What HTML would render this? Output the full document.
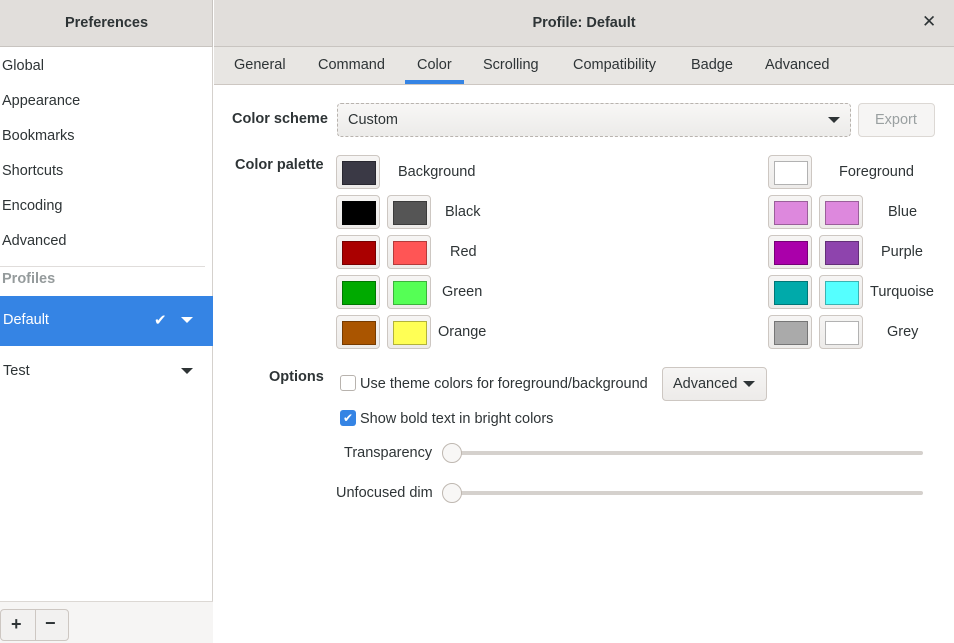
<!DOCTYPE html>
<html><head><style>
*{box-sizing:border-box;margin:0;padding:0}
body{width:954px;height:643px;overflow:hidden;font-family:"Liberation Sans","DejaVu Sans",sans-serif;font-size:14.5px;color:#2e3436;background:#fff;position:relative}
.abs{position:absolute}
.hdr{top:0;height:47px;background:#e1dedb;border-bottom:1px solid #c8c4c0}
.side{left:0;top:47px;width:213px;height:596px;background:#fff;border-right:1px solid #d5d1cd}
.item{position:absolute;left:2px}
.tabs{left:214px;top:47px;width:740px;height:38px;background:#e8e6e3;border-bottom:1px solid #cdc7c2}
.tab{position:absolute;top:10px}
.sw{position:absolute;width:44px;height:34px;border:1px solid #cdc7c2;border-radius:4px;background:linear-gradient(#f6f5f4,#edebe9)}
.sw i{position:absolute;left:5px;top:5px;width:34px;height:24px;border:1px solid rgba(0,0,0,.3)}
.lbl{position:absolute}
.bold{font-weight:bold}
</style></head><body>
<div class="abs hdr" style="left:0;width:213px;border-right:1px solid #c8c4c0"><div class="abs bold" style="left:0;width:213px;text-align:center;top:15px;color:#2e3436">Preferences</div></div>
<div class="abs hdr" style="left:214px;width:740px"><div class="abs bold" style="left:0;width:740px;text-align:center;top:15px">Profile: Default</div><div class="abs" style="left:708px;top:12px;font-size:17px">✕</div></div>
<div class="abs side">
<div class="item" style="top:11px">Global</div>
<div class="item" style="top:46px">Appearance</div>
<div class="item" style="top:81px">Bookmarks</div>
<div class="item" style="top:116px">Shortcuts</div>
<div class="item" style="top:151px">Encoding</div>
<div class="item" style="top:186px">Advanced</div>
<div class="abs" style="left:0;top:219px;width:205px;border-top:1px solid #e0dddb"></div>
<div class="item bold" style="top:224px;color:#959b9c">Profiles</div>
<div class="abs" style="left:0;top:249px;width:213px;height:50px;background:#3584e4;color:#fff"><div class="abs" style="left:3px;top:16px">Default</div><div class="abs" style="left:154px;top:15px;font-size:15px">✔</div><div class="abs" style="left:181px;top:21px;border:6px solid transparent;border-top:6px solid #fff;border-bottom:0"></div></div>
<div class="item" style="top:316px;left:3px">Test</div>
<div class="abs" style="left:181px;top:321px;border:6px solid transparent;border-top:6px solid #2e3436;border-bottom:0"></div>
<div class="abs" style="left:0;top:554px;width:213px;height:42px;background:#f6f5f4;border-top:1px solid #dcd8d4"></div>
<div class="abs" style="left:0;top:562px;width:69px;height:32px;border:1px solid #cdc7c2;border-radius:4px;background:#f2f1f0"><div class="abs" style="left:34px;top:0;height:30px;border-left:1px solid #cdc7c2"></div><div class="abs bold" style="left:10px;top:4px;font-size:18px">+</div><div class="abs bold" style="left:44px;top:3px;font-size:18px">−</div></div>
</div>
<div class="abs tabs">
<div class="tab" style="left:20px">General</div>
<div class="tab" style="left:104px">Command</div>
<div class="tab" style="left:203px">Color</div>
<div class="abs" style="left:191px;top:33px;width:59px;height:4px;background:#3584e4"></div>
<div class="tab" style="left:269px">Scrolling</div>
<div class="tab" style="left:359px">Compatibility</div>
<div class="tab" style="left:477px">Badge</div>
<div class="tab" style="left:551px">Advanced</div>
</div>
<div class="abs bold" style="left:232px;top:111px">Color scheme</div>
<div class="abs" style="left:337px;top:103px;width:514px;height:34px;border:1px dashed #b8b3ae;border-radius:4px;background:linear-gradient(#f8f7f6,#ecebe9)"><div class="abs" style="left:10px;top:8px">Custom</div><div class="abs" style="left:490px;top:13px;border:6px solid transparent;border-top:6px solid #2e3436;border-bottom:0"></div></div>
<div class="abs" style="left:858px;top:103px;width:77px;height:34px;border:1px solid #dcd8d4;border-radius:4px;background:#f6f5f4;color:#9aa0a1"><div class="abs" style="left:16px;top:8px">Export</div></div>
<div class="abs bold" style="left:235px;top:157px">Color palette</div>

<div class="sw" style="left:336px;top:155px"><i style="background:#3a3945"></i></div><div class="lbl" style="left:398px;top:164px">Background</div>
<div class="sw" style="left:336px;top:195px"><i style="background:#000"></i></div><div class="sw" style="left:387px;top:195px"><i style="background:#555"></i></div><div class="lbl" style="left:445px;top:204px">Black</div>
<div class="sw" style="left:336px;top:235px"><i style="background:#aa0000"></i></div><div class="sw" style="left:387px;top:235px"><i style="background:#ff5555"></i></div><div class="lbl" style="left:450px;top:244px">Red</div>
<div class="sw" style="left:336px;top:275px"><i style="background:#00aa00"></i></div><div class="sw" style="left:387px;top:275px"><i style="background:#55ff55"></i></div><div class="lbl" style="left:442px;top:284px">Green</div>
<div class="sw" style="left:336px;top:315px"><i style="background:#aa5500"></i></div><div class="sw" style="left:387px;top:315px"><i style="background:#ffff55"></i></div><div class="lbl" style="left:438px;top:324px">Orange</div>

<div class="sw" style="left:768px;top:155px"><i style="background:#fff"></i></div><div class="lbl" style="left:839px;top:164px">Foreground</div>
<div class="sw" style="left:768px;top:195px"><i style="background:#dd88dd"></i></div><div class="sw" style="left:819px;top:195px"><i style="background:#dd88dd"></i></div><div class="lbl" style="left:888px;top:204px">Blue</div>
<div class="sw" style="left:768px;top:235px"><i style="background:#aa00aa"></i></div><div class="sw" style="left:819px;top:235px"><i style="background:#8e44ad"></i></div><div class="lbl" style="left:881px;top:244px">Purple</div>
<div class="sw" style="left:768px;top:275px"><i style="background:#00aaaa"></i></div><div class="sw" style="left:819px;top:275px"><i style="background:#55ffff"></i></div><div class="lbl" style="left:870px;top:284px">Turquoise</div>
<div class="sw" style="left:768px;top:315px"><i style="background:#aaaaaa"></i></div><div class="sw" style="left:819px;top:315px"><i style="background:#fff"></i></div><div class="lbl" style="left:887px;top:324px">Grey</div>

<div class="abs bold" style="left:269px;top:369px">Options</div>
<div class="abs" style="left:340px;top:375px;width:16px;height:16px;border:1px solid #b8b3ae;border-radius:3px;background:#fff"></div>
<div class="abs" style="left:360px;top:376px">Use theme colors for foreground/background</div>
<div class="abs" style="left:662px;top:367px;width:105px;height:34px;border:1px solid #cdc7c2;border-radius:4px;background:linear-gradient(#f6f5f4,#edebe9)"><div class="abs" style="left:10px;top:8px">Advanced</div><div class="abs" style="left:80px;top:13px;border:6px solid transparent;border-top:6px solid #2e3436;border-bottom:0"></div></div>
<div class="abs" style="left:340px;top:410px;width:16px;height:16px;border-radius:3px;background:#3584e4;color:#fff;font-size:12px;text-align:center;line-height:16px">✔</div>
<div class="abs" style="left:360px;top:411px">Show bold text in bright colors</div>
<div class="abs" style="left:344px;top:445px">Transparency</div>
<div class="abs" style="left:450px;top:451px;width:473px;height:4px;background:#d5d1cd;border-radius:2px"></div>
<div class="abs" style="left:442px;top:443px;width:20px;height:20px;border-radius:50%;border:1px solid #bfb8b1;background:#f8f7f6"></div>
<div class="abs" style="left:336px;top:485px">Unfocused dim</div>
<div class="abs" style="left:450px;top:491px;width:473px;height:4px;background:#d5d1cd;border-radius:2px"></div>
<div class="abs" style="left:442px;top:483px;width:20px;height:20px;border-radius:50%;border:1px solid #bfb8b1;background:#f8f7f6"></div>
</body></html>
